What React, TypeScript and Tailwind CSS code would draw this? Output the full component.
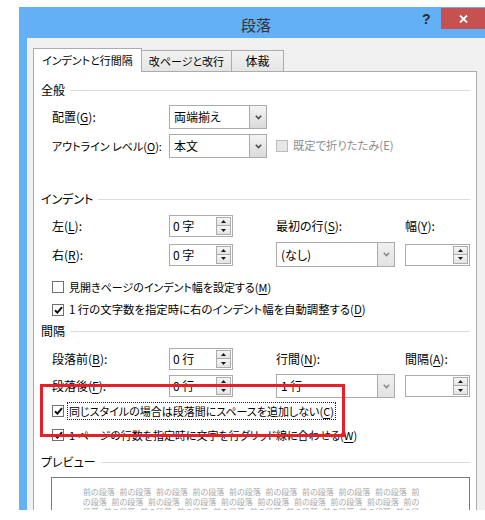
/**
 * Word "段落" dialog — インデントと行間隔 tab, with an annotation box.
 */
import type { ReactNode } from 'react'

export default function App() {
  return (
    <div className="relative h-[520px] w-[485px] overflow-hidden bg-white font-['Noto_Sans_CJK_JP',sans-serif] text-[12px] leading-none text-black [font-feature-settings:'palt']">
      <div className="ml-[19px] mt-[7px] flex h-[503px] w-[474px] flex-col bg-[#63B0F6]">
        <TitleBar />
        <div className="mx-[8px] flex-1 overflow-hidden bg-[#F0F0F0] pl-[6px] pr-[8px] pt-[10px]">
          <div className="flex h-[24px] items-end">
            <div className="relative z-10 flex h-[24px] w-[109px] items-center justify-center border border-b-0 border-[#ACACAC] bg-white text-[11px]">
              インデントと行間隔
            </div>
            <div className="flex h-[22px] w-[90px] items-center justify-center border-r border-t border-[#ACACAC] bg-linear-to-b from-[#F2F2F2] to-[#E4E4E4] pb-px text-[11px]">
              改ページと改行
            </div>
            <div className="flex h-[22px] w-[52px] items-center justify-center border-r border-t border-[#ACACAC] bg-linear-to-b from-[#F2F2F2] to-[#E4E4E4] pb-px">
              体裁
            </div>
          </div>

          <div className="relative -mt-px h-[500px] border border-[#ACACAC] bg-white pl-[7px] pr-[6px]">
            <Section title="全般" className="mt-[9px]" />
            <div className="mt-[6px] flex h-[24px] items-center pl-[11px]">
              <span className="w-[117px]">
                配置(<K>G</K>):
              </span>
              <Select value="両端揃え" width="w-[98px]" />
            </div>
            <div className="mt-[5px] flex h-[24px] items-center pl-[11px]">
              <span className="w-[117px] whitespace-nowrap text-[11px]">
                アウトライン レベル(<K>O</K>):
              </span>
              <Select value="本文" width="w-[98px]" />
              <span className="ml-[9px] h-[12px] w-[12px] border border-[#BCBCBC] bg-[#E6E6E6]" />
              <span className="ml-[5px] whitespace-nowrap text-[11.3px] text-[#8D8D8D]">既定で折りたたみ(E)</span>
            </div>

            <Section title="インデント" className="mt-[32px]" />
            <div className="mt-[7px] flex h-[22px] items-center pl-[11px]">
              <span className="w-[117px]">
                左(<K>L</K>):
              </span>
              <Spinner value="0 字" width="w-[64px]" />
              <span className="ml-[43px] w-[129px]">
                最初の行(<K>S</K>):
              </span>
              <span>
                幅(<K>Y</K>):
              </span>
            </div>
            <div className="mt-[5px] flex h-[25px] items-center pl-[11px]">
              <span className="w-[117px]">
                右(<K>R</K>):
              </span>
              <Spinner value="0 字" width="w-[64px]" />
              <div className="ml-[43px]">
                <Select value="(なし)" width="w-[119px]" tall light />
              </div>
              <div className="ml-[10px]">
                <Spinner value="" width="w-[65px]" />
              </div>
            </div>

            <Check className="mt-[11px]" size="text-[11px]">
              見開きページのインデント幅を設定する(<K>M</K>)
            </Check>
            <Check className="mt-[5px]" checked size="text-[11.4px]">
              1 行の文字数を指定時に右のインデント幅を自動調整する(<K>D</K>)
            </Check>

            <Section title="間隔" className="mt-[3px]" />
            <div className="mt-[8px] flex h-[22px] items-center pl-[11px]">
              <span className="w-[117px]">
                段落前(<K>B</K>):
              </span>
              <Spinner value="0 行" width="w-[64px]" />
              <span className="ml-[43px] w-[129px]">
                行間(<K>N</K>):
              </span>
              <span>
                間隔(<K>A</K>):
              </span>
            </div>
            <div className="mt-[4px] flex h-[24px] items-center pl-[11px]">
              <span className="w-[117px]">
                段落後(<K>F</K>):
              </span>
              <Spinner value="0 行" width="w-[64px]" />
              <div className="ml-[43px]">
                <Select value="1 行" width="w-[119px]" light />
              </div>
              <div className="ml-[10px]">
                <Spinner value="" width="w-[65px]" />
              </div>
            </div>

            <Check className="mt-[4px]" checked focused size="text-[11px]">
              同じスタイルの場合は段落間にスペースを追加しない(<K>C</K>)
            </Check>
            <Check className="mt-[6px]" checked size="text-[11px]">
              1 ページの行数を指定時に文字を行グリッド線に合わせる(<K>W</K>)
            </Check>

            <Section title="プレビュー" className="mt-[9px]" />
            <div className="ml-[10px] mt-[6px] h-[80px] border border-[#7A7A7A] bg-white pl-[31px] pt-[9px]">
              <p className="w-[342px] text-[8px] leading-[10px] text-[#A8A8A8] [word-spacing:3px]">
                {'前の段落 '.repeat(30)}
              </p>
            </div>
          </div>
        </div>
      </div>

      {/* annotation */}
      <div className="absolute left-[40px] top-[384px] h-[53px] w-[305px] border-[3px] border-[#E5202A]" />
    </div>
  )
}

function TitleBar() {
  return (
    <div className="relative flex h-[31px] shrink-0 items-center justify-center pt-[4px]">
      <span className="text-[15px] text-[#333333]">段落</span>
      <span className="absolute left-[403px] top-[5px] text-[14px] font-bold text-[#2B2B2B] [font-family:'Liberation_Sans',sans-serif]">
        ?
      </span>
      <div className="absolute right-[8px] top-[1px] flex h-[21px] w-[44px] items-center justify-center bg-[#C75050]">
        <svg width="9" height="8" viewBox="0 0 9 8">
          <path d="M1 0.5 L8 7.5 M8 0.5 L1 7.5" stroke="#FFFFFF" strokeWidth="1.8" />
        </svg>
      </div>
    </div>
  )
}

function K({ children }: { children: ReactNode }) {
  return <span className="underline underline-offset-[2px]">{children}</span>
}

function Section({ title, className = '' }: { title: string; className?: string }) {
  return (
    <div className={`flex h-[18px] items-center ${className}`}>
      <span>{title}</span>
      <span className="ml-[5px] h-px flex-1 bg-[#DCDCDC]" />
    </div>
  )
}

function Chevron({ light }: { light?: boolean }) {
  return (
    <svg width="7" height="5" viewBox="0 0 7 5">
      <path d="M0.8 0.8 L3.5 3.6 L6.2 0.8" fill="none" stroke={light ? '#8A8A8A' : '#4D4D4D'} strokeWidth="1.6" />
    </svg>
  )
}

function Select({ value, width, tall, light }: { value: string; width: string; tall?: boolean; light?: boolean }) {
  return (
    <div className={`flex ${tall ? 'h-[25px]' : 'h-[24px]'} ${width} items-stretch border border-[#ABABAB] bg-white`}>
      <span className="flex flex-1 items-center pl-[4px]">{value}</span>
      <span
        className={`flex w-[17px] items-center justify-center border-l border-[#ABABAB] bg-linear-to-b ${
          light ? 'from-[#F0F0F0] to-[#E2E2E2]' : 'from-[#F4F4F4] to-[#DADADA]'
        }`}
      >
        <Chevron light={light} />
      </span>
    </div>
  )
}

function Spinner({ value, width }: { value: string; width: string }) {
  return (
    <div className={`flex h-[22px] ${width} items-center border border-[#ABABAB] bg-white`}>
      <span className="flex-1 pl-[3px]">{value}</span>
      <div className="mr-[1px] flex h-[18px] w-[15px] flex-col">
        <span className="flex h-[9px] items-center justify-center border border-[#ACACAC] bg-linear-to-b from-[#F6F6F6] to-[#E4E4E4]">
          <svg width="5" height="3" viewBox="0 0 5 3">
            <path d="M0 3 L2.5 0 L5 3 Z" fill="#1A1A1A" />
          </svg>
        </span>
        <span className="flex h-[9px] items-center justify-center border border-t-0 border-[#ACACAC] bg-linear-to-b from-[#F6F6F6] to-[#E4E4E4]">
          <svg width="5" height="3" viewBox="0 0 5 3">
            <path d="M0 0 L2.5 3 L5 0 Z" fill="#1A1A1A" />
          </svg>
        </span>
      </div>
    </div>
  )
}

function Check({
  children,
  checked = false,
  focused = false,
  size = '',
  className = '',
}: {
  children: ReactNode
  checked?: boolean
  focused?: boolean
  size?: string
  className?: string
}) {
  return (
    <div className={`flex h-[18px] items-center pl-[11px] ${className}`}>
      <span className="flex h-[12px] w-[12px] items-center justify-center border border-[#707070] bg-white">
        {checked && (
          <svg width="9" height="8" viewBox="0 0 9 8">
            <path d="M1 4.2 L3.4 6.6 L8 1.2" fill="none" stroke="#111111" strokeWidth="2" />
          </svg>
        )}
      </span>
      <span
        className={`ml-[3px] flex h-[18px] items-center whitespace-nowrap px-[1px] ${size} ${
          focused ? 'border border-dotted border-[#222222]' : 'border border-transparent'
        }`}
      >
        {children}
      </span>
    </div>
  )
}
